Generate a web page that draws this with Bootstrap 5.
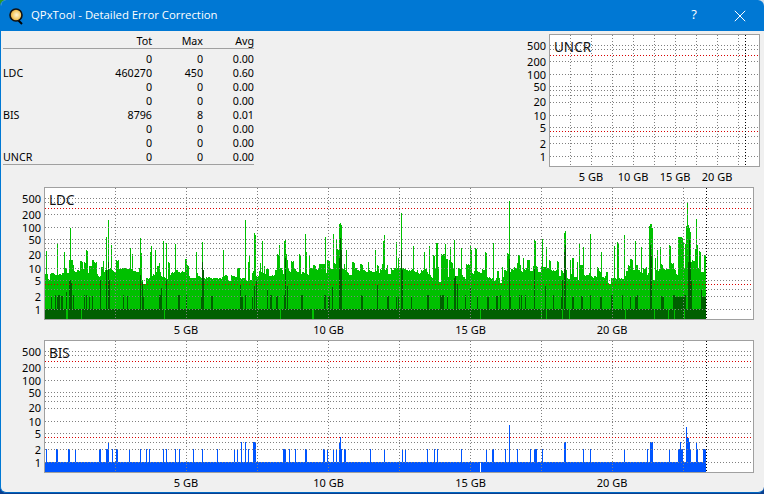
<!DOCTYPE html>
<html lang="en">
<head>
<meta charset="utf-8">
<title>QPxTool - Detailed Error Correction</title>
<link rel="stylesheet" href="https://cdn.jsdelivr.net/npm/bootstrap@5.3.0/dist/css/bootstrap.min.css">
<style>
html,body{margin:0;height:494px;overflow:hidden}
body{font-family:"Noto Sans",sans-serif;font-size:11px;color:#000;
 background:
  linear-gradient(#2f9a22,#2f9a22) 0 0/12px 12px no-repeat,
  linear-gradient(#d6dfe8,#d6dfe8) 100% 0/12px 12px no-repeat,
  #0a3f8f}
.qwin{width:764px;height:493px;border-radius:6px;overflow:hidden;background:#f0f0f0;border-left:1px solid #0078d4;border-bottom:1px solid #0067c0}
.qtitle{height:31px;flex:none;background:#0078d4;color:#fff;font-family:"Open Sans",sans-serif;font-size:11.35px;padding-left:7px}
.qtitle .qname{margin-left:6px;margin-top:-1px}
.qhelp{width:46px;text-align:center;font-size:13px;margin-top:-1px}
.qclose{width:46px;margin-right:1px}
.qtop{height:156px;flex:none;padding-left:2px}
.qtable{width:251px;table-layout:fixed;margin:3px 0 0;--bs-table-bg:transparent;--bs-table-color:#000;font-size:10.7px;line-height:14px;border-collapse:separate;border-spacing:0}
.qtable th,.qtable td{padding:0;height:14px;text-align:right;font-weight:400;border:0;box-shadow:none;white-space:nowrap}
.qtable th:first-child,.qtable td:first-child{text-align:left;width:98px}
.qtable thead th{border-bottom:1px solid #a0a0a0;height:15px}
.qtable tbody tr:first-child td{height:17px;padding-top:3px}
.qtable tbody tr:last-child td{border-bottom:1px solid #a0a0a0;height:15px}
.qplot{display:block;flex:none;font-family:"Noto Sans",sans-serif;font-size:11px}
.qplot text{fill:#000}
.qplot .qlbl{font-size:13.5px;fill:#111}
</style>
</head>
<body>
<div class="qwin d-flex flex-column">
  <div class="qtitle d-flex align-items-center">
    <svg width="17" height="18" viewBox="0 0 17 18">
      <defs><radialGradient id="qg" cx=".55" cy=".5" r=".6"><stop offset="0" stop-color="#fff6d8"/><stop offset=".6" stop-color="#f5c860"/><stop offset="1" stop-color="#c9801c"/></radialGradient></defs>
      <path d="M10 13l4 4" stroke="#000" stroke-width="2"/>
      <circle cx="8" cy="8" r="6" fill="url(#qg)" stroke="#111" stroke-width="1.6"/>
    </svg>
    <span class="qname">QPxTool - Detailed Error Correction</span>
    <span class="qhelp ms-auto">?</span>
    <span class="qclose d-flex justify-content-center">
      <svg width="12" height="12" viewBox="0 0 12 12"><path d="M.8.8l10.4 10.4M11.2.8L.8 11.2" stroke="#fff" stroke-width="1" fill="none"/></svg>
    </span>
  </div>
  <div class="qtop d-flex justify-content-between align-items-start">
    <table class="table table-borderless qtable">
      <thead><tr><th></th><th>Tot</th><th>Max</th><th>Avg</th></tr></thead>
      <tbody>
        <tr><td></td><td>0</td><td>0</td><td>0.00</td></tr>
        <tr><td>LDC</td><td>460270</td><td>450</td><td>0.60</td></tr>
        <tr><td></td><td>0</td><td>0</td><td>0.00</td></tr>
        <tr><td></td><td>0</td><td>0</td><td>0.00</td></tr>
        <tr><td>BIS</td><td>8796</td><td>8</td><td>0.01</td></tr>
        <tr><td></td><td>0</td><td>0</td><td>0.00</td></tr>
        <tr><td></td><td>0</td><td>0</td><td>0.00</td></tr>
        <tr><td>UNCR</td><td>0</td><td>0</td><td>0.00</td></tr>
      </tbody>
    </table>
    <svg id="uncr" class="qplot" width="244" height="156" viewBox="520 31 244 156"></svg>
  </div>
  <svg id="ldc" class="qplot" width="763" height="153" viewBox="1 187 763 153"></svg>
  <svg id="bis" class="qplot" width="763" height="153" viewBox="1 187 763 153"></svg>
</div>
<script src="https://cdn.jsdelivr.net/npm/bootstrap@5.3.0/dist/js/bootstrap.bundle.min.js"></script>
<script>
(function(){
  var seed=73421;
  function R(){seed=(seed*1664525+1013904223)>>>0;return seed/4294967296;}
  function ri(a,b){return a+Math.floor(R()*(b-a+1));}
  var ROWS=[198,202,214,227,239,243,248,255,268,280,289,296,309];
  var RED=[208,284];
  var LABELS=[[500,199],[200,215],[100,228],[50,240],[20,255],[10,269],[5,281],[2,297],[1,310]];
  function P(d,col,extra){return '<path d="'+d+'" stroke="'+col+'" fill="none" shape-rendering="crispEdges" '+(extra||'')+'/>';}
  function frame(o){
    var s='',dy=o.dy||0,d='',i;
    s+='<rect x="'+o.L+'" y="'+(187+dy)+'" width="'+(o.Rt-o.L)+'" height="132" fill="#fff"/>';
    s+=o.bars||'';
    d='';
    ROWS.forEach(function(y){d+='M'+(o.L+1)+' '+(y+dy+.5)+'H'+(o.Rt-1);});
    for(i=1;i<=o.n;i++){var x=o.L+o.step*i;d+='M'+(x+.5)+' '+(188+dy)+'V'+(319+dy);}
    s+=P(d,'#808080','stroke-dasharray="1 2"');
    d='';RED.forEach(function(y){d+='M'+(o.L+1)+' '+(y+dy+.5)+'H'+(o.Rt-1);});
    s+=P(d,'#d80000','stroke-dasharray="1 2"');
    s+=P('M'+(o.end+.5)+' '+(188+dy)+'V'+(319+dy),'#000','stroke-dasharray="1 2"');
    s+='<rect x="'+(o.L+.5)+'" y="'+(187.5+dy)+'" width="'+(o.Rt-o.L)+'" height="132" fill="none" stroke="#a0a0a0" shape-rendering="crispEdges"/>';
    LABELS.forEach(function(l){s+='<text x="'+(o.L-3)+'" y="'+(l[1]+dy+4)+'" text-anchor="end">'+l[0]+'</text>';});
    s+='<text class="qlbl" x="'+(o.L+5)+'" y="'+(205+dy)+'">'+o.name+'</text>';
    o.xl.forEach(function(t){s+='<text x="'+t[0]+'" y="'+(334+dy)+'" text-anchor="middle">'+t[1]+'</text>';});
    return s;
  }
  var top={},dark={};
  var level=273,x=45;
  while(x<706){
    level+=ri(-2,2); if(level<268)level=268; if(level>278)level=278;
    var w=ri(1,3),t=level,r=R();
    if(r<.28)t=level-ri(3,11);
    else if(r<.40){t=level-ri(11,24);w=ri(1,2);}
    else if(r<.52)t=level+ri(1,6);
    for(var k=0;k<w&&x<706;k++,x++){
      top[x]=t+(k?ri(0,1):0);
    }
  }
  for(x=45;x<706;x++){
    var q=R();
    if(q<.10){dark[x]=ri(295,297);if(R()<.3)dark[x+1]=dark[x];}
    else if(q<.125){dark[x]=ri(280,290);}
  }
  [[46,251],[57,243],[64,252],[70,228],[69,260],[71,260],[72,260],[106,237],[108,220],[111,245],[130,248],[132,254],[140,238],[151,246],[155,250],[163,241],[166,243],[175,244],[196,252],[202,242],[223,250],[245,220],[248,262],[254,233],[255,235],[262,241],[279,245],[284,241],[285,240],[286,254],[305,234],[309,255],[325,237],[333,234],[336,239],[339,224],[340,223],[341,225],[346,250],[375,250],[383,241],[384,235],[396,242],[401,213],[413,246],[424,252],[429,246],[436,243],[437,243],[445,244],[450,247],[454,240],[461,248],[470,246],[471,250],[493,243],[509,201],[518,255],[519,255],[534,240],[535,241],[542,239],[564,233],[565,231],[579,243],[583,247],[590,234],[601,252],[614,246],[617,242],[618,243],[624,235],[635,241],[641,247],[649,226],[650,224],[651,224],[652,228],[657,250],[660,247],[678,237],[679,237],[680,237],[681,237],[682,238],[683,242],[686,226],[687,203],[688,225],[689,228],[690,232],[696,219],[697,245],[704,255],[705,256]]
  .forEach(function(a){top[a[0]]=a[1];});
  [[66,292],[69,281],[70,280],[71,283],[106,270],[108,262],[109,280],[140,275],[202,262],[203,270],[285,258],[339,258],[340,238],[341,250],[401,250],[402,270],[454,278],[455,276],[470,288],[509,259],[534,268],[564,252],[565,245],[650,245],[651,255],[676,297],[677,297],[678,297],[679,297],[680,297],[681,297],[682,297],[683,297],[688,262],[689,240],[690,262],[691,281],[701,290],[702,297],[703,297],[704,297],[705,297]]
  .forEach(function(a){dark[a[0]]=a[1];});
  var bright='',dk='',stripes='';
  for(x=45;x<706;x++){ bright+='M'+(x+.5)+' '+top[x]+'V309'; if(dark[x])dk+='M'+(x+.5)+' '+dark[x]+'V309'; }
  [66,67,81,164,280,312,313,480,541,546,562,569,625,654,668,674,684].forEach(function(x){stripes+='M'+(x+.5)+' 309V319';});
  var ldcBars=P(bright,'#00c000')+'<rect x="45" y="309" width="661" height="10" fill="#006000"/>'+P(dk,'#006000')+P(stripes,'#00c000');
  var gb=[[186,'5 GB'],[328.5,'10 GB'],[470.5,'15 GB'],[612,'20 GB']];
  document.getElementById('ldc').innerHTML=frame({L:44,Rt:753,step:71,n:9,end:706,name:'LDC',bars:ldcBars,xl:gb});
  var b2=[46,56,57,68,69,75,99,100,106,107,112,116,117,129,140,146,149,163,166,175,179,193,202,217,234,237,248,283,284,285,289,295,305,306,323,324,327,333,336,341,344,345,370,384,402,405,427,434,437,461,486,492,493,505,517,530,534,535,536,542,583,590,624,647,669,678,679,681,682,690,697,703,704,705];
  var b3=[108,241,245,253,254,255,339,564,565,650,651,652,680,689,696];
  var bd='';
  b2.forEach(function(x){bd+='M'+(x+.5)+' 296V309';});
  b3.forEach(function(x){bd+='M'+(x+.5)+' 289V309';});
  [[340,284],[509,272],[686,274],[687,285],[688,285]].forEach(function(a){bd+='M'+(a[0]+.5)+' '+a[1]+'V309';});
  var bisBars=P(bd,'#0055ff')+'<rect x="45" y="309" width="661" height="10" fill="#0055ff"/><rect x="480" y="309" width="1" height="10" fill="#fff"/>';
  document.getElementById('bis').innerHTML=frame({L:44,Rt:753,step:71,n:9,end:706,name:'BIS',bars:bisBars,xl:gb});
  document.getElementById('uncr').innerHTML=frame({L:549,Rt:759,step:21,n:9,end:745,dy:-153,name:'UNCR',xl:[[591,'5 GB'],[633,'10 GB'],[675,'15 GB'],[717,'20 GB']]});
})();
</script>
</body>
</html>
